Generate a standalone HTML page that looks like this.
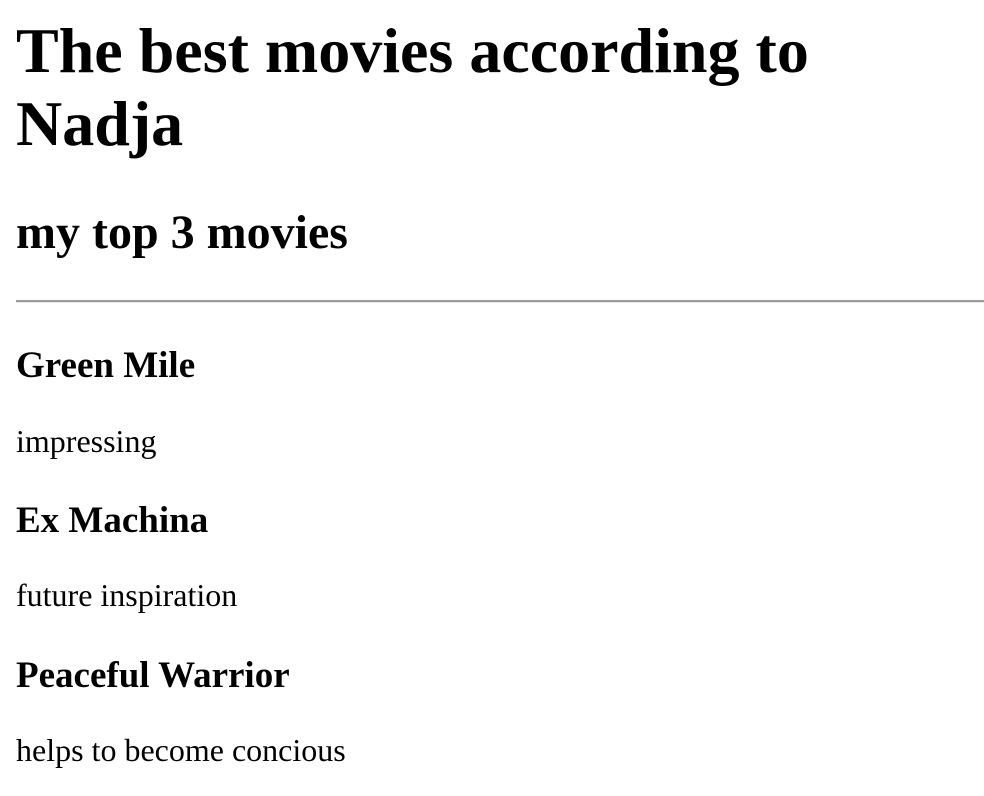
<!DOCTYPE html>
<html><head><style>
body{margin:0;width:984px;height:796px;background:#fff;font-family:"Liberation Serif","Times New Roman",serif;color:#000;position:relative;overflow:hidden}
.t{position:absolute;left:16px;margin:0;line-height:1;white-space:nowrap}
.h1{font-size:64px;font-weight:bold}
.h2{font-size:48px;font-weight:bold}
.h4{font-size:37px;font-weight:bold}
.p{font-size:32px}
.hr{position:absolute;left:16px;width:968px;top:300px;height:2px;background:#9a9a9a;border-bottom:1px solid #e8e8e8}
</style></head><body>
<div class="t h1" style="top:19px">The best movies according to</div>
<div class="t h1" style="top:92px">Nadja</div>
<div class="t h2" style="top:209px">my top 3 movies</div>
<div class="hr"></div>
<div class="t h4" style="top:347px">Green Mile</div>
<div class="t p" style="top:425px">impressing</div>
<div class="t h4" style="top:502px">Ex Machina</div>
<div class="t p" style="top:579px">future inspiration</div>
<div class="t h4" style="top:657px">Peaceful Warrior</div>
<div class="t p" style="top:734px">helps to become concious</div>
</body></html>
